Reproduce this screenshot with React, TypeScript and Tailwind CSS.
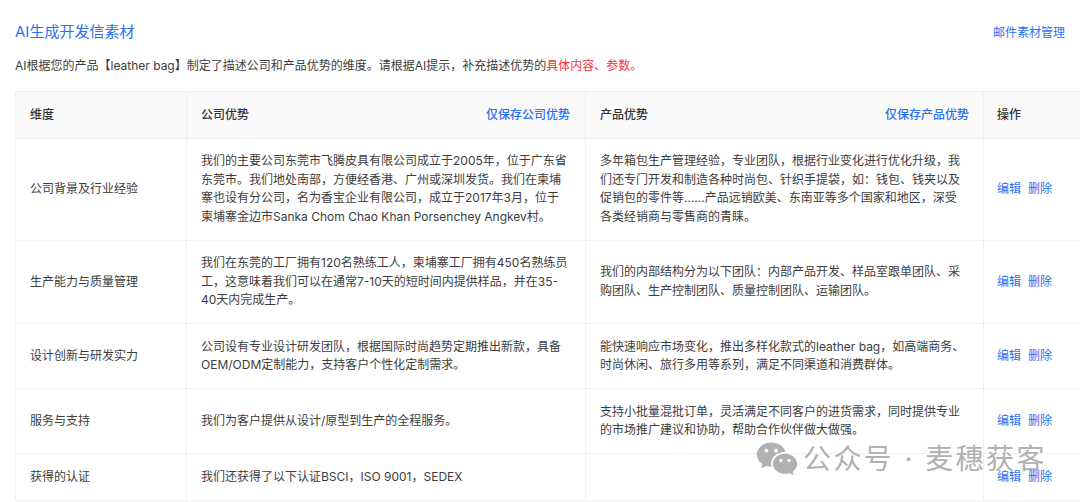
import { RiWechatFill } from 'react-icons/ri';

const rows = [
  {
    dimension: '公司背景及行业经验',
    company:
      '我们的主要公司东莞市飞腾皮具有限公司成立于2005年，位于广东省东莞市。我们地处南部，方便经香港、广州或深圳发货。我们在柬埔寨也设有分公司，名为香宝企业有限公司，成立于2017年3月，位于柬埔寨金边市Sanka Chom Chao Khan Porsenchey Angkev村。',
    product:
      '多年箱包生产管理经验，专业团队，根据行业变化进行优化升级，我们还专门开发和制造各种时尚包、针织手提袋，如：钱包、钱夹以及促销包的零件等......产品远销欧美、东南亚等多个国家和地区，深受各类经销商与零售商的青睐。',
  },
  {
    dimension: '生产能力与质量管理',
    company:
      '我们在东莞的工厂拥有120名熟练工人，柬埔寨工厂拥有450名熟练员工，这意味着我们可以在通常7-10天的短时间内提供样品，并在35-40天内完成生产。',
    product:
      '我们的内部结构分为以下团队：内部产品开发、样品室跟单团队、采购团队、生产控制团队、质量控制团队、运输团队。',
  },
  {
    dimension: '设计创新与研发实力',
    company:
      '公司设有专业设计研发团队，根据国际时尚趋势定期推出新款，具备OEM/ODM定制能力，支持客户个性化定制需求。',
    product:
      '能快速响应市场变化，推出多样化款式的leather bag，如高端商务、时尚休闲、旅行多用等系列，满足不同渠道和消费群体。',
  },
  {
    dimension: '服务与支持',
    company: '我们为客户提供从设计/原型到生产的全程服务。',
    product:
      '支持小批量混批订单，灵活满足不同客户的进货需求，同时提供专业的市场推广建议和协助，帮助合作伙伴做大做强。',
  },
  {
    dimension: '获得的认证',
    company: '我们还获得了以下认证BSCI，ISO 9001，SEDEX',
    product: '',
  },
];

const App = () => {
  return (
    <div className="relative h-[502px] w-[1080px] overflow-hidden bg-white font-['Inter','Noto_Sans_CJK_SC',sans-serif] text-xs text-[#3d3d3d]">
      <div className="flex items-center justify-between pt-[21px] pl-[15px] pr-[15px]">
        <h1 className="text-[15px] leading-5 text-[#2b6ff6]">AI生成开发信素材</h1>
        <a className="mt-[2px] text-xs leading-5 text-[#2b6ff6]">邮件素材管理</a>
      </div>
      <p className="mt-[13px] pl-[15px] leading-5 text-[#3d3d3d]">
        AI根据您的产品【leather bag】制定了描述公司和产品优势的维度。请根据AI提示，补充描述优势的
        <span className="text-[#fa2f3a]">具体内容、参数。</span>
      </p>

      <table className="mt-[15px] ml-[15px] w-[1075px] table-fixed border-collapse leading-[18.5px]">
        <colgroup>
          <col className="w-[171px]" />
          <col className="w-[399px]" />
          <col className="w-[398px]" />
          <col />
        </colgroup>
        <thead>
          <tr className="bg-[#fafafa] text-[#333333]">
            <th className="border border-[#f0f0f0] px-[14px] py-[13.5px] text-left font-medium">维度</th>
            <th className="border border-[#f0f0f0] pl-[14px] pr-[15px] py-[13.5px] text-left font-medium">
              <div className="flex justify-between">
                <span>公司优势</span>
                <a className="text-[#2b6ff6]">仅保存公司优势</a>
              </div>
            </th>
            <th className="border border-[#f0f0f0] pl-[14px] pr-[14px] py-[13.5px] text-left font-medium">
              <div className="flex justify-between">
                <span>产品优势</span>
                <a className="text-[#2b6ff6]">仅保存产品优势</a>
              </div>
            </th>
            <th className="border border-[#f0f0f0] px-[13px] py-[13.5px] text-left font-medium">操作</th>
          </tr>
        </thead>
        <tbody>
          {rows.map(row => (
            <tr key={row.dimension}>
              <td className="border border-[#f0f0f0] px-[14px] py-[13.5px]">{row.dimension}</td>
              <td className="border border-[#f0f0f0] pl-[14px] pr-[15px] py-[13.5px]">{row.company}</td>
              <td className="border border-[#f0f0f0] pl-[14px] pr-[18px] py-[13.5px]">{row.product}</td>
              <td className="border border-[#f0f0f0] px-[13px] py-[13.5px] text-[#2b6ff6]">
                <div className="flex gap-[7px]">
                  <a>编辑</a>
                  <a>删除</a>
                </div>
              </td>
            </tr>
          ))}
        </tbody>
      </table>

      <div className="absolute top-[437px] left-[755px] flex items-center text-[#b1b1b1]">
        <RiWechatFill className="h-[44px] w-[44px]" />
        <span className="ml-[4px] text-[28px] leading-10 tracking-[2.4px]">公众号 · 麦穗获客</span>
      </div>
    </div>
  );
};

export default App;
